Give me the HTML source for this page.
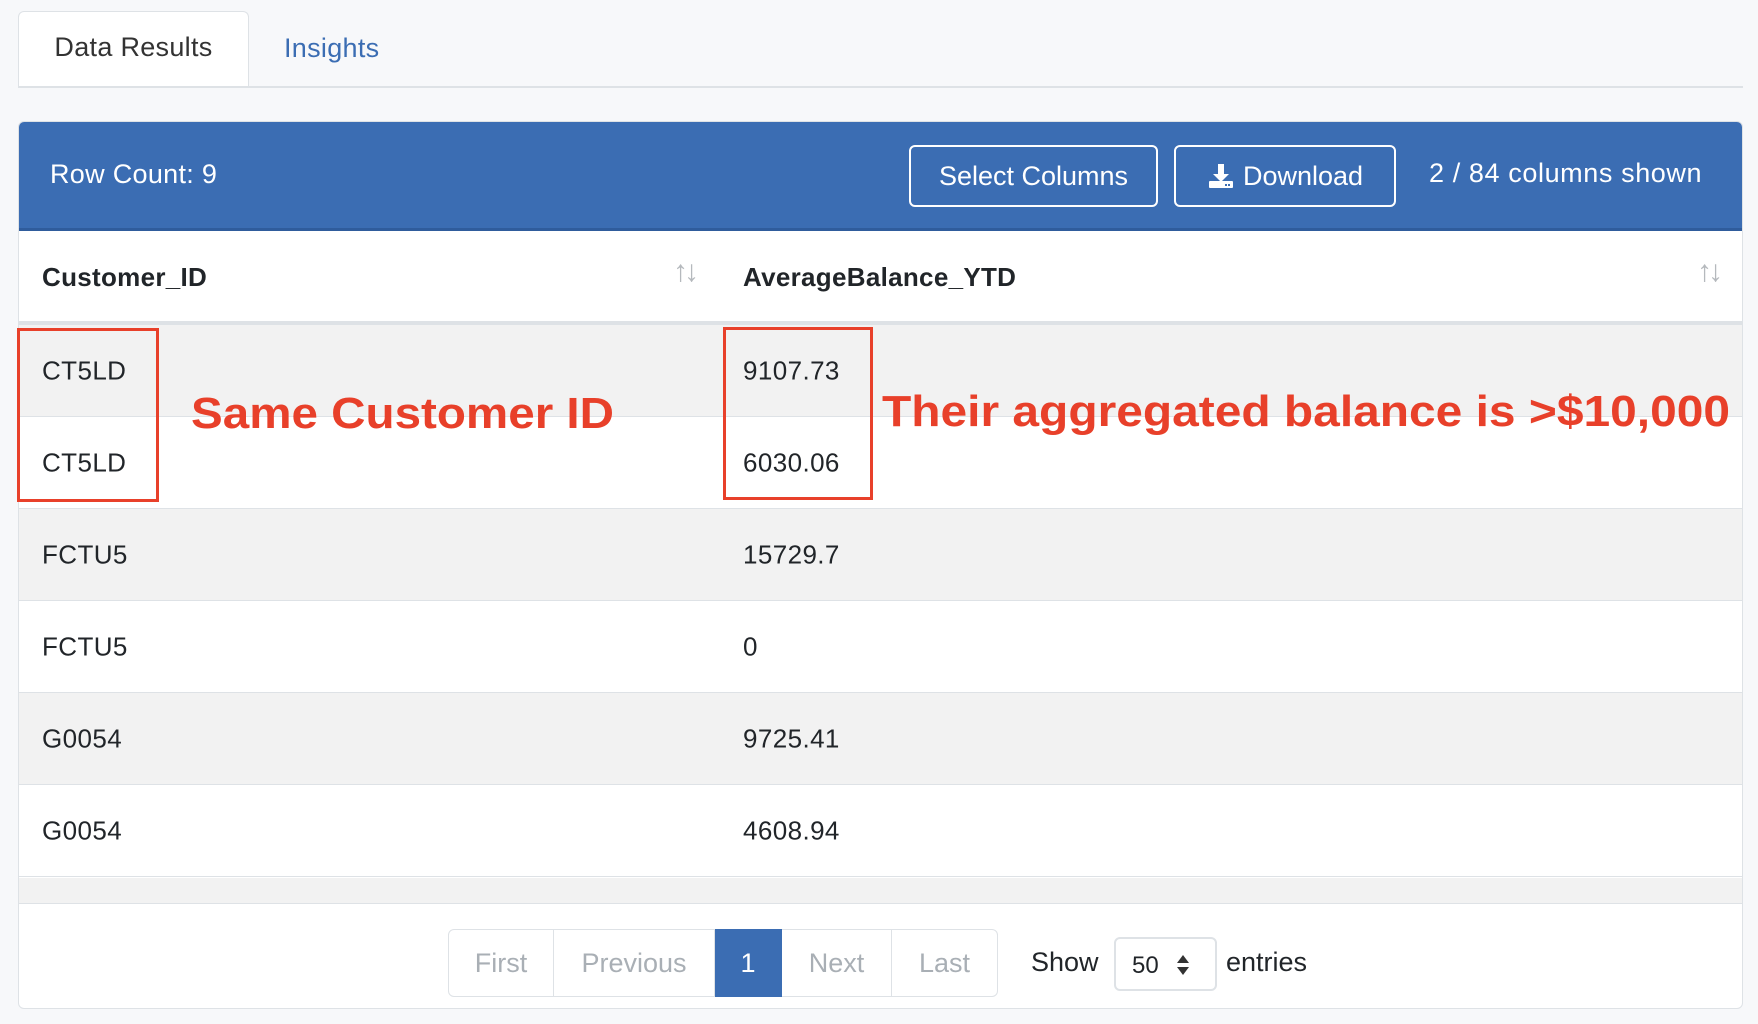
<!DOCTYPE html>
<html><head><meta charset="utf-8"><style>
*{box-sizing:border-box;margin:0;padding:0}
body{width:1758px;height:1024px;background:#f7f8fa;font-family:"Liberation Sans",sans-serif;color:#212529;position:relative;overflow:hidden}
.abs{position:absolute}
.tab{left:18px;top:11px;width:231px;height:77px;background:#fff;border:1px solid #dee2e6;border-bottom:none;border-radius:6px 6px 0 0;font-size:27px;color:#333;display:flex;align-items:center;justify-content:center;padding-bottom:6px;letter-spacing:0.3px}
.line{left:18px;top:86px;width:1725px;height:2px;background:#dee2e6}
.panel{left:18px;top:121px;width:1725px;height:888px;background:#fff;border:1px solid #dee2e6;border-radius:6px;overflow:hidden}
.blue{left:0;top:0;width:100%;height:109px;background:#3b6db3;border-bottom:3px solid #2f5c9c}
.btn{border:2px solid #fff;border-radius:6px;color:#fff;font-size:27px;display:flex;align-items:center;justify-content:center;top:23px;height:62px}
.row{left:0;width:100%;height:92px;border-bottom:1px solid #dee2e6;font-size:26px;letter-spacing:0.4px}
.row span{position:absolute;top:50%;transform:translateY(-50%)}
.g{background:#f2f2f2}
.red{border:3px solid #e8402a}
.pg{top:807px;height:68px;border:1px solid #dee2e6;border-left:none;display:flex;align-items:center;justify-content:center;font-size:27px;color:#a9afb5}
.sort{color:#b5b9bd;font-weight:normal;font-size:30px;letter-spacing:-4px}
</style></head><body>
<div class="abs tab">Data Results</div>
<div class="abs" style="left:284px;top:33px;font-size:27px;color:#3b6db3;letter-spacing:0.3px">Insights</div>
<div class="abs line"></div>
<div class="abs panel">
 <div class="abs blue">
  <div class="abs" style="left:31px;top:37px;color:#fff;font-size:27px;letter-spacing:0.3px">Row Count: 9</div>
  <div class="abs btn" style="left:890px;width:249px">Select Columns</div>
  <div class="abs btn" style="left:1155px;width:222px"><svg width="28" height="28" viewBox="0 0 28 28" style="margin-right:8px"><path d="M11 2h6v10h5l-8 8-8-8h5z" fill="#fff"/><rect x="2" y="19" width="24" height="7" rx="1" fill="#fff"/><rect x="18" y="22" width="2" height="2" fill="#3b6db3"/><rect x="21" y="22" width="2" height="2" fill="#3b6db3"/></svg>Download</div>
  <div class="abs" style="left:1410px;top:36px;color:#fff;font-size:27px;letter-spacing:0.6px">2 / 84 columns shown</div>
 </div>
 <div class="abs" style="left:0;top:109px;width:100%;height:94px;border-bottom:4px solid #dee2e6;font-size:26px;font-weight:bold">
  <span class="abs" style="left:23px;top:31px;letter-spacing:0.3px">Customer_ID</span>
  <span class="abs sort" style="left:654px;top:24px">↑↓</span>
  <span class="abs" style="left:724px;top:31px;letter-spacing:0.3px">AverageBalance_YTD</span>
  <span class="abs sort" style="left:1678px;top:24px">↑↓</span>
 </div>
 <div class="abs row g" style="top:203px"><span style="left:23px">CT5LD</span><span style="left:724px">9107.73</span></div>
 <div class="abs row" style="top:295px"><span style="left:23px">CT5LD</span><span style="left:724px">6030.06</span></div>
 <div class="abs row g" style="top:387px"><span style="left:23px">FCTU5</span><span style="left:724px">15729.7</span></div>
 <div class="abs row" style="top:479px"><span style="left:23px">FCTU5</span><span style="left:724px">0</span></div>
 <div class="abs row g" style="top:571px"><span style="left:23px">G0054</span><span style="left:724px">9725.41</span></div>
 <div class="abs row" style="top:663px"><span style="left:23px">G0054</span><span style="left:724px">4608.94</span></div>
 <div class="abs g" style="left:0;top:756px;width:100%;height:26px;border-bottom:1px solid #dee2e6"></div>
 <div class="abs pg" style="left:429px;width:106px;border-left:1px solid #dee2e6;border-radius:6px 0 0 6px">First</div>
 <div class="abs pg" style="left:535px;width:161px">Previous</div>
 <div class="abs pg" style="left:696px;width:67px;background:#3b6db3;color:#fff;border-color:#3b6db3">1</div>
 <div class="abs pg" style="left:763px;width:110px">Next</div>
 <div class="abs pg" style="left:873px;width:106px;border-radius:0 6px 6px 0">Last</div>
 <div class="abs" style="left:1012px;top:825px;font-size:27px">Show</div>
 <div class="abs" style="left:1095px;top:815px;width:103px;height:54px;border:2px solid #dee2e6;border-radius:6px;font-size:24px;padding:13px 0 0 16px">50<svg style="position:absolute;left:60px;top:15px" width="14" height="22" viewBox="0 0 14 22"><path d="M7 1l6 8H1z M7 21l6-8H1z" fill="#333"/></svg></div>
 <div class="abs" style="left:1207px;top:825px;font-size:27px">entries</div>
</div>
<div class="abs red" style="left:17px;top:328px;width:142px;height:174px"></div>
<div class="abs red" style="left:723px;top:327px;width:150px;height:173px"></div>
<svg class="abs" style="left:0;top:0" width="1758" height="1024">
<text x="191" y="428" font-family="Liberation Sans" font-weight="bold" font-size="44" fill="#e8402a" textLength="423" lengthAdjust="spacingAndGlyphs">Same Customer ID</text>
<text x="882" y="426" font-family="Liberation Sans" font-weight="bold" font-size="44" fill="#e8402a" textLength="848" lengthAdjust="spacingAndGlyphs">Their aggregated balance is &gt;$10,000</text>
</svg>
</body></html>
